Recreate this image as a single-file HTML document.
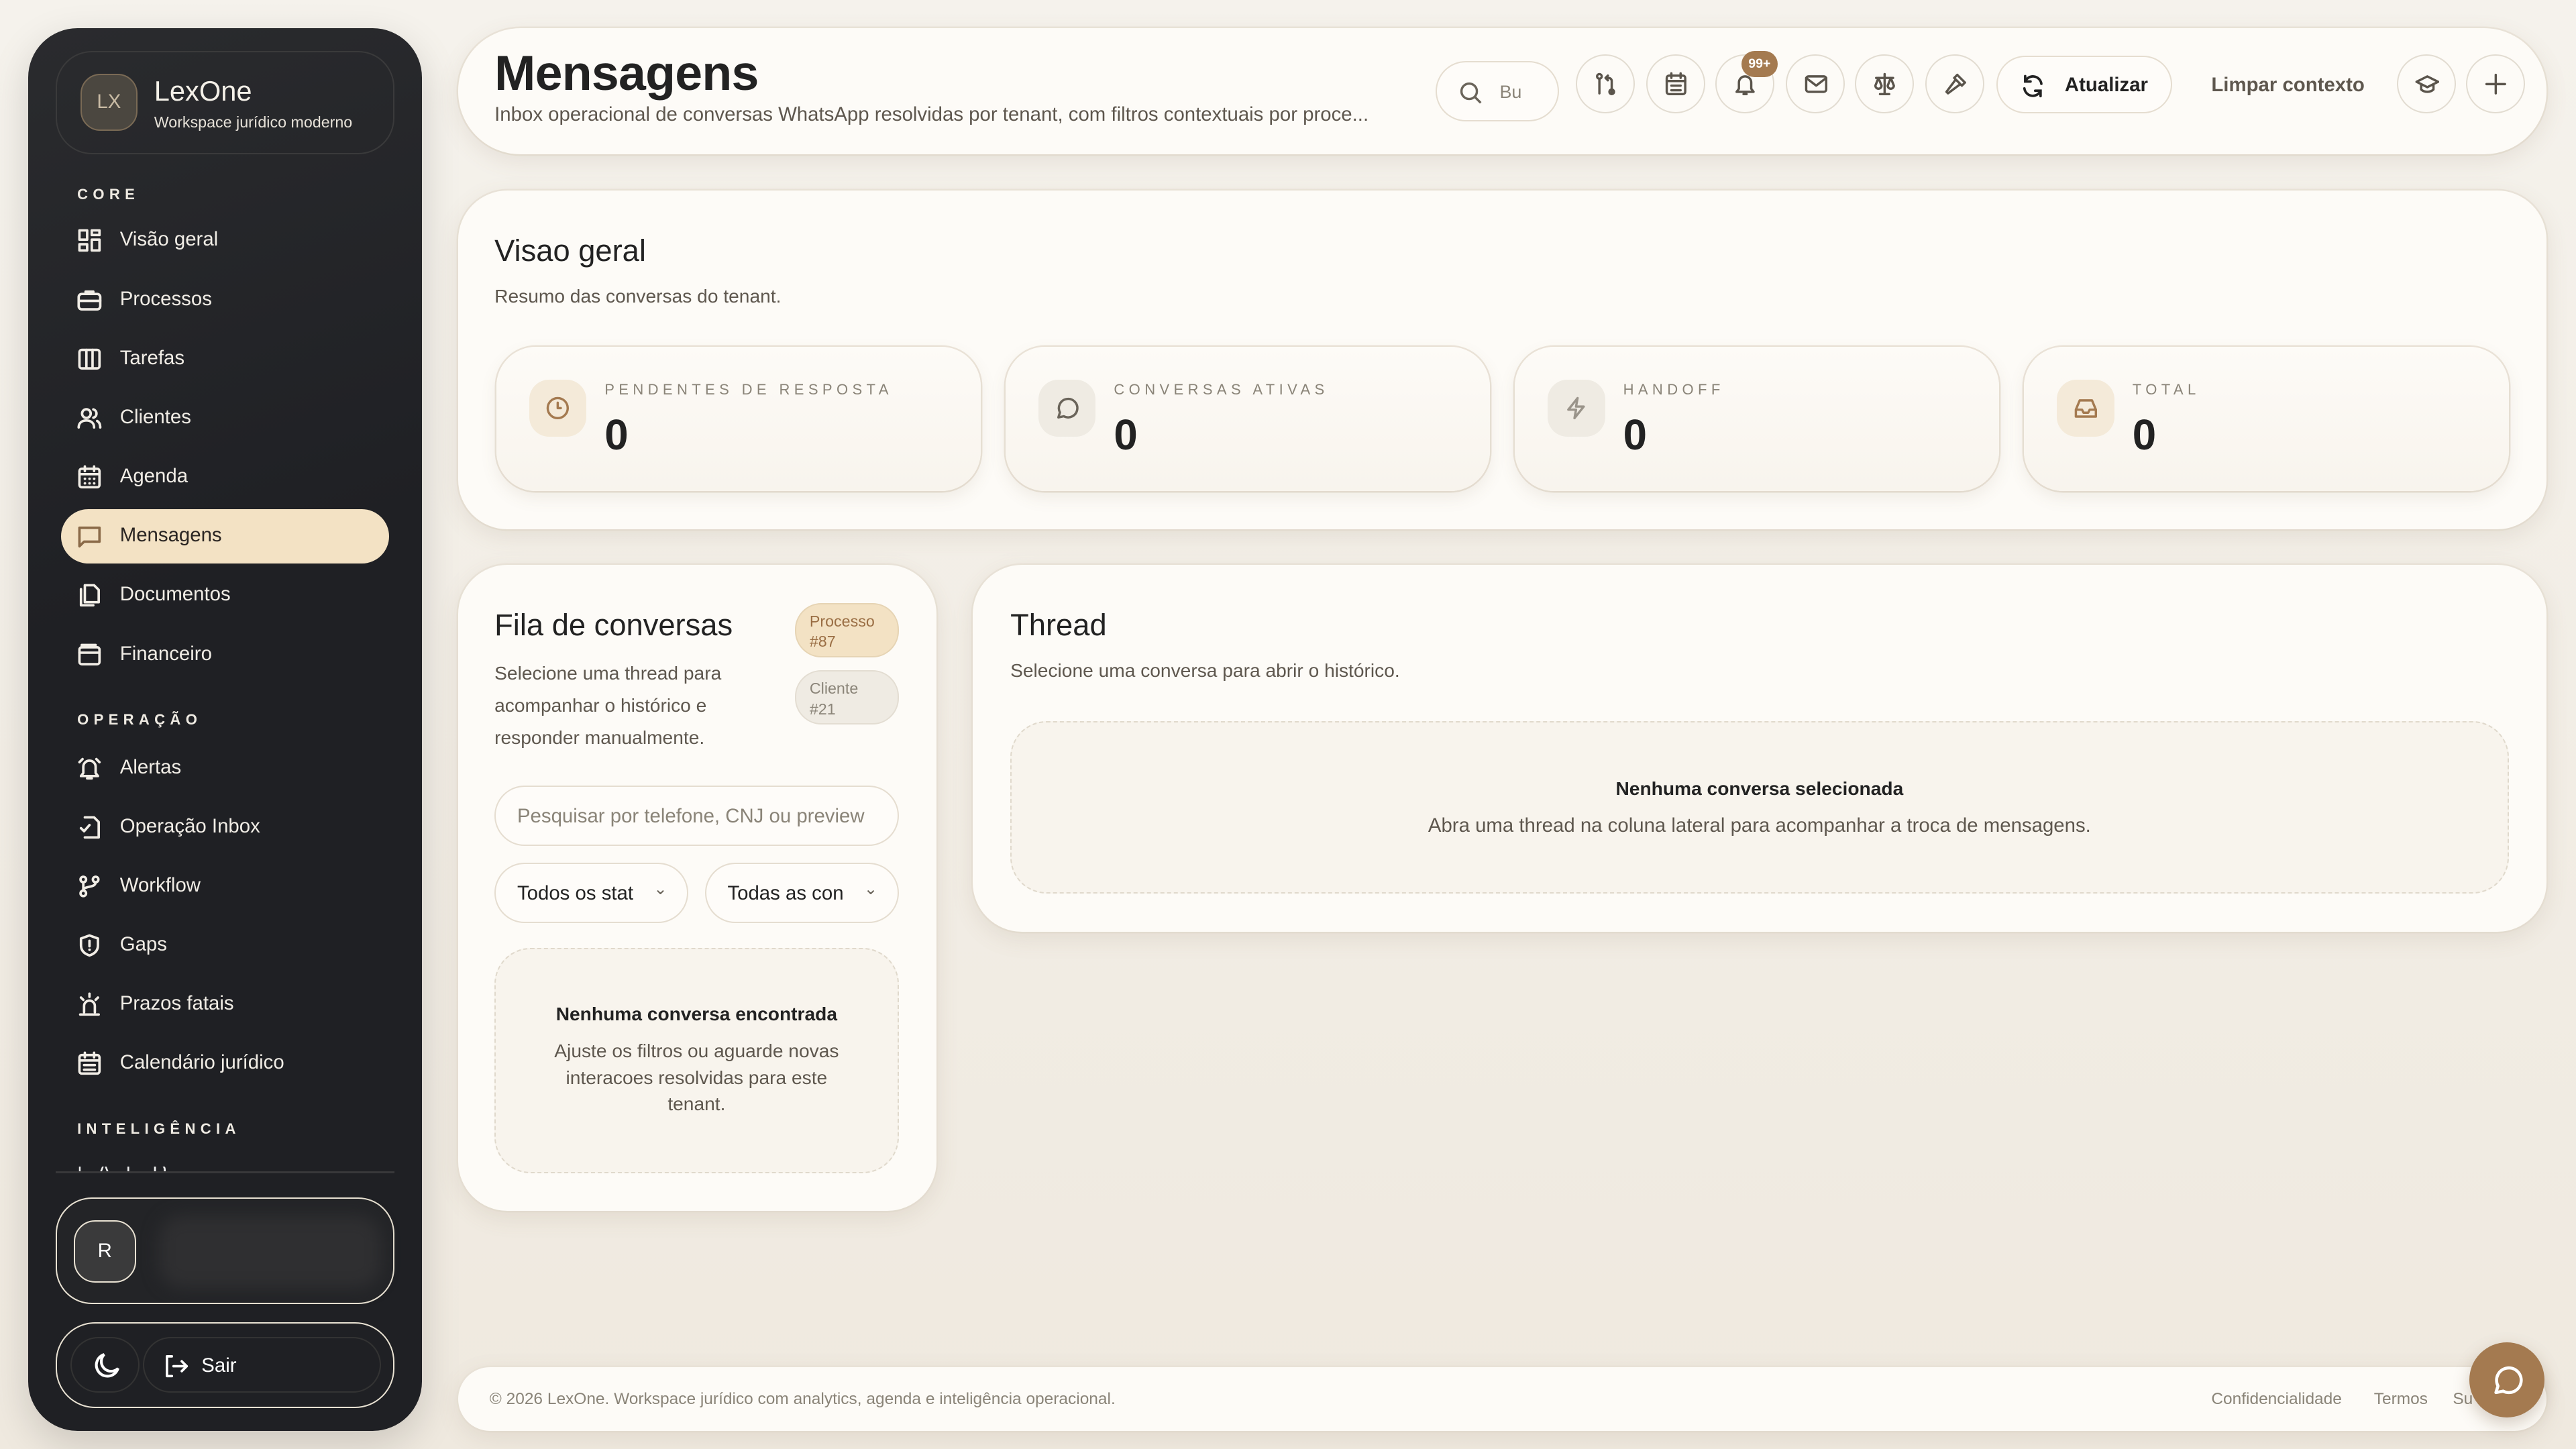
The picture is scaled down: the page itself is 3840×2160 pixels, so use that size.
<!DOCTYPE html>
<html><head><meta charset="utf-8"><style>
*{box-sizing:border-box;margin:0;padding:0}
html,body{width:3840px;height:2160px;overflow:hidden;background:#f3efe7}
#r{position:absolute;left:0;top:0;width:1568px;height:882px;zoom:2.449;font-family:"Liberation Sans",sans-serif;background:linear-gradient(180deg,#f5f2ec,#efe9df)}
.a{position:absolute}
.sb{left:17px;top:17px;width:240px;height:854px;border-radius:30px;background:linear-gradient(160deg,#2a2b2e,#1f2024 40%);box-shadow:0 8px 24px rgba(0,0,0,.15);overflow:hidden}
.brand{left:17px;top:14px;width:206px;height:63px;border:1px solid #3a3a3b;border-radius:22px}
.lx{left:14px;top:13px;width:35px;height:35px;border-radius:12px;background:#4b4740;border:1px solid #7a6a55;color:#c9bba4;font-size:12px;text-align:center;line-height:33px}
.sec{left:30px;font-size:9px;font-weight:bold;letter-spacing:3px;color:#eeeae2}
.it{left:20px;width:200px;height:33px;border-radius:17px;color:#f1ede6;font-size:12px}
.it span{position:absolute;left:36px;top:9px}
.it svg{position:absolute;left:10px;top:9px;width:15px;height:15px;fill:none;stroke:currentColor;stroke-width:1.6;stroke-linecap:round;stroke-linejoin:round}
.act{background:#f3e2c4;color:#2a2522}
.card{background:#fdfbf7;border-radius:30px;box-shadow:0 4px 14px rgba(120,100,70,.12),0 0 0 1px #ece6db}
.ib{width:36px;height:36px;border-radius:18px;border:1px solid #e2dcd1;background:#fdfbf7}
.ib svg{position:absolute;left:10px;top:10px;width:15px;height:15px;fill:none;stroke:#5a544b;stroke-width:1.5;stroke-linecap:round;stroke-linejoin:round}
.st{top:95px;width:295px;height:88px;border-radius:24px;background:linear-gradient(#fdfbf7,#f8f4ed);box-shadow:0 4px 10px rgba(120,100,70,.1),0 0 0 1px #ece5da}
.st .ic{left:20px;top:20px;width:35px;height:35px;border-radius:12px;background:#efebe3}
.st .ic svg{position:absolute;left:10px;top:10px;width:15px;height:15px;fill:none;stroke:#6a645a;stroke-width:1.5;stroke-linecap:round;stroke-linejoin:round}
.st .lb{left:66px;top:21px;font-size:9px;letter-spacing:2.6px;color:#8a8478}
.st .n{left:66px;top:39px;font-size:26px;font-weight:bold;color:#222}
h2{font-weight:normal;font-size:18.5px;color:#222;position:absolute}
.sub{font-size:11.5px;color:#5e574e;position:absolute}
.dash{border:1px dashed #e0d9cc;border-radius:22px;background:#f8f4ed}
.pill{border:1px solid #e5ddd0;border-radius:19px;background:#fefcf9;font-size:12px}
</style></head><body><div id="r">

<div class="a sb">
 <div class="a brand"><div class="a lx">LX</div>
  <div class="a" style="left:59px;top:14px;font-size:17px;color:#f4f0e8">LexOne</div>
  <div class="a" style="left:59px;top:37px;font-size:9.5px;color:#e6e1d8">Workspace jurídico moderno</div></div>
 <div class="a sec" style="top:96px">CORE</div>
 <div class="a it" style="top:113px"><svg viewBox="0 0 16 16"><rect x="1.5" y="1.5" width="5" height="6"/><rect x="9.5" y="1.5" width="5" height="3"/><rect x="1.5" y="10.5" width="5" height="4"/><rect x="9.5" y="7.5" width="5" height="7"/></svg><span>Visão geral</span></div>
 <div class="a it" style="top:149px"><svg viewBox="0 0 16 16"><rect x="1" y="4" width="14" height="10" rx="2"/><path d="M5.5 4V2.5h5V4M1 8.5h14"/></svg><span>Processos</span></div>
 <div class="a it" style="top:185px"><svg viewBox="0 0 16 16"><rect x="1.5" y="2" width="13" height="12" rx="1.5"/><path d="M6 2v12M10 2v12"/></svg><span>Tarefas</span></div>
 <div class="a it" style="top:221px"><svg viewBox="0 0 16 16"><circle cx="6" cy="5" r="2.8"/><path d="M1 14c0-3 2.2-4.5 5-4.5s5 1.5 5 4.5M10.5 2.3a2.8 2.8 0 0 1 0 5.4M13 9.8c1.3.7 2 2 2 4.2"/></svg><span>Clientes</span></div>
 <div class="a it" style="top:257px"><svg viewBox="0 0 16 16"><rect x="1.5" y="2.5" width="13" height="12" rx="1.5"/><path d="M5 1v3M11 1v3M1.5 6h13M5 9h.1M8 9h.1M11 9h.1M5 12h.1M8 12h.1M11 12h.1"/></svg><span>Agenda</span></div>
 <div class="a it act" style="top:293px"><svg viewBox="0 0 16 16" style="stroke:#8a6a48"><path d="M1.5 2.5h13v9H4.5l-3 3z"/></svg><span>Mensagens</span></div>
 <div class="a it" style="top:329px"><svg viewBox="0 0 16 16"><path d="M5 1.5h6l3 3v8H5zM2.5 4v10.5h8"/></svg><span>Documentos</span></div>
 <div class="a it" style="top:365px"><svg viewBox="0 0 16 16"><rect x="1.5" y="3" width="13" height="11" rx="1.5"/><path d="M1.5 6.5h13M3 3V1.5h9"/></svg><span>Financeiro</span></div>
 <div class="a sec" style="top:416px">OPERAÇÃO</div>
 <div class="a it" style="top:434px"><svg viewBox="0 0 16 16"><path d="M4 7a4 4 0 0 1 8 0v4l1.5 2h-11L4 11zM6.5 14.5h3M1.5 4l2-2M14.5 4l-2-2"/></svg><span>Alertas</span></div>
 <div class="a it" style="top:470px"><svg viewBox="0 0 16 16"><path d="M5 1.5h6l3 3v10H5M2.5 8.5l2 2 3.5-4"/></svg><span>Operação Inbox</span></div>
 <div class="a it" style="top:506px"><svg viewBox="0 0 16 16"><circle cx="4" cy="3.5" r="1.8"/><circle cx="12" cy="3.5" r="1.8"/><circle cx="4" cy="12.5" r="1.8"/><path d="M4 5.3v5.4M12 5.3c0 4-8 2-8 5.4"/></svg><span>Workflow</span></div>
 <div class="a it" style="top:542px"><svg viewBox="0 0 16 16"><path d="M8 1.5l5.5 2v4.5c0 3.5-2.5 5.5-5.5 6.5-3-1-5.5-3-5.5-6.5V3.5zM8 5v3.5M8 10.8h.1"/></svg><span>Gaps</span></div>
 <div class="a it" style="top:578px"><svg viewBox="0 0 16 16"><path d="M4.5 13V9a3.5 3.5 0 0 1 7 0v4M2 14.5h12M8 1v2M2.5 3.5l1.5 1.5M13.5 3.5 12 5"/></svg><span>Prazos fatais</span></div>
 <div class="a it" style="top:614px"><svg viewBox="0 0 16 16"><rect x="1.5" y="2.5" width="13" height="12" rx="1.5"/><path d="M5 1v3M11 1v3M1.5 6h13M4.5 9h7M4.5 12h7"/></svg><span>Calendário jurídico</span></div>
 <div class="a sec" style="top:665px">INTELIGÊNCIA</div>
 <div class="a" style="top:693px;left:20px;width:200px;height:3px;overflow:hidden;color:#eee;font-size:12px"><span style="position:absolute;left:10px;top:-4px">| &nbsp; A &nbsp; l &nbsp;&nbsp; D</span></div>
 <div class="a" style="left:17px;top:696px;width:206px;height:1px;background:#38383a"></div>
 <div class="a" style="left:17px;top:712px;width:206px;height:65px;border:1px solid #e9e2d3;border-radius:22px;background:#232427">
  <div class="a" style="left:10px;top:13px;width:38px;height:38px;border-radius:13px;border:1px solid #e9e2d3;background:#3a3a3b;color:#fff;font-size:12px;text-align:center;line-height:36px">R</div>
  <div class="a" style="left:62px;top:10px;width:135px;height:44px;border-radius:14px;background:#2f2f31;filter:blur(5px)"></div></div>
 <div class="a" style="left:17px;top:788px;width:206px;height:52px;border:1px solid #e9e2d3;border-radius:24px">
  <div class="a" style="left:8px;top:8px;width:42px;height:34px;border-radius:17px;border:1px solid #333"><svg class="a" style="left:12px;top:8px" width="18" height="18" viewBox="0 0 16 16" fill="none" stroke="#fff" stroke-width="1.5"><path d="M7 1.5a6 6 0 1 0 7.5 7.5A5 5 0 0 1 7 1.5z"/></svg></div>
  <div class="a" style="left:52px;top:8px;width:145px;height:34px;border-radius:17px;border:1px solid #333"><svg class="a" style="left:12px;top:9px" width="16" height="16" viewBox="0 0 16 16" fill="none" stroke="#fff" stroke-width="1.5" stroke-linecap="round" stroke-linejoin="round"><path d="M5 2H2v12h3M6 8h8M11 5l3 3-3 3"/></svg><span class="a" style="left:35px;top:10px;color:#fff;font-size:12px">Sair</span></div>
 </div>
</div>

<div class="a card" style="left:279px;top:17px;width:1271px;height:77px;border-radius:38px">
 <div class="a" style="left:22px;top:10px;font-size:30px;font-weight:bold;color:#222;letter-spacing:-.3px">Mensagens</div>
 <div class="a" style="left:22px;top:46px;font-size:12px;color:#5e574e">Inbox operacional de conversas WhatsApp resolvidas por tenant, com filtros contextuais por proce...</div>
 <div class="a pill" style="left:595px;top:20px;width:75px;height:37px"><svg class="a" style="left:13px;top:11px" width="15" height="15" viewBox="0 0 16 16" fill="none" stroke="#6a645a" stroke-width="1.5"><circle cx="7" cy="7" r="5"/><path d="M11 11l3.5 3.5"/></svg><span class="a" style="left:38px;top:12px;color:#8a8478;font-size:11px">Bu</span></div>
 <div class="a ib" style="left:680px;top:16px"><svg viewBox="0 0 16 16"><circle cx="4" cy="3" r="1.5"/><path d="M4 4.5V14M12 14V6a2 2 0 0 0-2-2H8M9.5 2.5 8 4l1.5 1.5"/><circle cx="12" cy="13" r="1.5"/></svg></div>
 <div class="a ib" style="left:723px;top:16px"><svg viewBox="0 0 16 16"><rect x="2" y="2.5" width="12" height="12" rx="1.5"/><path d="M5 1v3M11 1v3M2 6h12M5 9h6M5 12h6"/></svg></div>
 <div class="a ib" style="left:765px;top:16px"><svg viewBox="0 0 16 16"><path d="M4 7a4 4 0 0 1 8 0v4l1.5 2h-11L4 11zM7 14.5h2"/></svg></div>
 <div class="a" style="left:781px;top:14px;width:22px;height:16px;border-radius:8px;background:#a47a50;color:#fff;font-size:8px;font-weight:bold;text-align:center;line-height:16px">99+</div>
 <div class="a ib" style="left:808px;top:16px"><svg viewBox="0 0 16 16"><rect x="1.5" y="3" width="13" height="10" rx="1.5"/><path d="M1.5 4l6.5 5 6.5-5"/></svg></div>
 <div class="a ib" style="left:850px;top:16px"><svg viewBox="0 0 16 16"><path d="M8 1.5v13M5 14.5h6M2.5 4h11M4 4l-2 5a2 2 0 0 0 4 0zM12 4l-2 5a2 2 0 0 0 4 0z"/></svg></div>
 <div class="a ib" style="left:893px;top:16px"><svg viewBox="0 0 16 16"><path d="M9 2l5 5-2 2-5-5zM8 5l-6 8 1 1 8-6"/></svg></div>
 <div class="a pill" style="left:936px;top:17px;width:107px;height:35px;border-radius:18px"><svg class="a" style="left:14px;top:10px" width="15" height="15" viewBox="0 0 16 16" fill="none" stroke="#222" stroke-width="1.6" stroke-linecap="round"><path d="M13.5 6.5A5.5 5.5 0 0 0 3 5M2.5 9.5A5.5 5.5 0 0 0 13 11M3 1.5V5h3.5M13 14.5V11H9.5"/></svg><span class="a" style="left:41px;top:10px;color:#222;font-weight:bold;font-size:12px">Atualizar</span></div>
 <div class="a" style="left:1067px;top:28px;font-size:12px;font-weight:bold;color:#5e574e">Limpar contexto</div>
 <div class="a ib" style="left:1180px;top:16px"><svg viewBox="0 0 16 16"><path d="M1 6.5 8 3l7 3.5L8 10zM4 8v3.5c2 2 6 2 8 0V8"/></svg></div>
 <div class="a ib" style="left:1222px;top:16px"><svg viewBox="0 0 16 16"><path d="M8 2v12M2 8h12"/></svg></div>
</div>

<div class="a card" style="left:279px;top:116px;width:1271px;height:206px">
 <h2 style="left:22px;top:26px">Visao geral</h2>
 <div class="sub" style="left:22px;top:58px">Resumo das conversas do tenant.</div>
 <div class="a st" style="left:23px"><div class="a ic" style="background:#f4ead9"><svg viewBox="0 0 16 16" style="stroke:#a47a50"><circle cx="8" cy="8" r="6.5"/><path d="M8 4.5V8h2"/></svg></div><div class="a lb">PENDENTES DE RESPOSTA</div><div class="a n">0</div></div>
 <div class="a st" style="left:333px"><div class="a ic"><svg viewBox="0 0 16 16"><path d="M2.5 14l1-3.2A6 6 0 1 1 6 13.3z"/></svg></div><div class="a lb">CONVERSAS ATIVAS</div><div class="a n">0</div></div>
 <div class="a st" style="left:643px"><div class="a ic"><svg viewBox="0 0 16 16" style="stroke:#9a948a"><path d="M9 1.5 3 9h5l-1 5.5L13 7H8z"/></svg></div><div class="a lb">HANDOFF</div><div class="a n">0</div></div>
 <div class="a st" style="left:953px"><div class="a ic" style="background:#f4ead9"><svg viewBox="0 0 16 16" style="stroke:#a47a50"><path d="M1.5 9 4 3h8l2.5 6v4.5h-13zM1.5 9h4l1 2h3l1-2h4"/></svg></div><div class="a lb">TOTAL</div><div class="a n">0</div></div>
</div>

<div class="a card" style="left:279px;top:344px;width:291px;height:393px">
 <h2 style="left:22px;top:26px">Fila de conversas</h2>
 <div class="sub" style="left:22px;top:56px;width:170px;line-height:19.7px">Selecione uma thread para acompanhar o histórico e responder manualmente.</div>
 <div class="a" style="left:205px;top:23px;width:63px;height:33px;border-radius:16px;background:#f3e2c4;border:1px solid #e6d4b4;color:#9a6e44;font-size:9.5px;line-height:12.5px;padding:4px 0 0 8px">Processo<br>#87</div>
 <div class="a" style="left:205px;top:64px;width:63px;height:33px;border-radius:16px;background:#efebe3;border:1px solid #e3ddd2;color:#8a8478;font-size:9.5px;line-height:12.5px;padding:4px 0 0 8px">Cliente<br>#21</div>
 <div class="a pill" style="left:22px;top:134px;width:246px;height:37px"><span class="a" style="left:13px;top:11px;color:#8a8478">Pesquisar por telefone, CNJ ou preview</span></div>
 <div class="a pill" style="left:22px;top:181px;width:118px;height:37px"><span class="a" style="left:13px;top:11px;color:#222">Todos os stat</span><span class="a" style="left:96px;top:9px;color:#6a645a;font-size:10px">&#8964;</span></div>
 <div class="a pill" style="left:150px;top:181px;width:118px;height:37px"><span class="a" style="left:13px;top:11px;color:#222">Todas as con</span><span class="a" style="left:96px;top:9px;color:#6a645a;font-size:10px">&#8964;</span></div>
 <div class="a dash" style="left:22px;top:233px;width:246px;height:137px;text-align:center">
  <div style="margin-top:33px;font-size:11.5px;font-weight:bold;color:#222">Nenhuma conversa encontrada</div>
  <div style="margin:8px 28px 0;font-size:11.5px;line-height:16px;color:#5e574e">Ajuste os filtros ou aguarde novas interacoes resolvidas para este tenant.</div></div>
</div>

<div class="a card" style="left:592px;top:344px;width:958px;height:223px">
 <h2 style="left:23px;top:26px">Thread</h2>
 <div class="sub" style="left:23px;top:58px">Selecione uma conversa para abrir o histórico.</div>
 <div class="a dash" style="left:23px;top:95px;width:912px;height:105px;text-align:center">
  <div style="margin-top:34px;font-size:11.5px;font-weight:bold;color:#222">Nenhuma conversa selecionada</div>
  <div style="margin-top:9px;font-size:12px;color:#5e574e">Abra uma thread na coluna lateral para acompanhar a troca de mensagens.</div></div>
</div>

<div class="a card" style="left:279px;top:832px;width:1271px;height:39px;border-radius:20px">
 <div class="a" style="left:19px;top:14px;font-size:10px;color:#8a8478">© 2026 LexOne. Workspace jurídico com analytics, agenda e inteligência operacional.</div>
 <div class="a" style="left:1067px;top:14px;font-size:10px;color:#8a8478">Confidencialidade</div>
 <div class="a" style="left:1166px;top:14px;font-size:10px;color:#8a8478">Termos</div>
 <div class="a" style="left:1214px;top:14px;font-size:10px;color:#8a8478">Su</div>
</div>
<div class="a" style="left:1503px;top:817px;width:46px;height:46px;border-radius:23px;background:#a47a50;box-shadow:0 4px 10px rgba(100,70,40,.25)"><svg class="a" style="left:13px;top:13px" width="20" height="20" viewBox="0 0 16 16" fill="none" stroke="#fff" stroke-width="1.5" stroke-linejoin="round"><path d="M2.5 14l1-3.2A6 6 0 1 1 6 13.3z"/></svg></div>

</div></body></html>
